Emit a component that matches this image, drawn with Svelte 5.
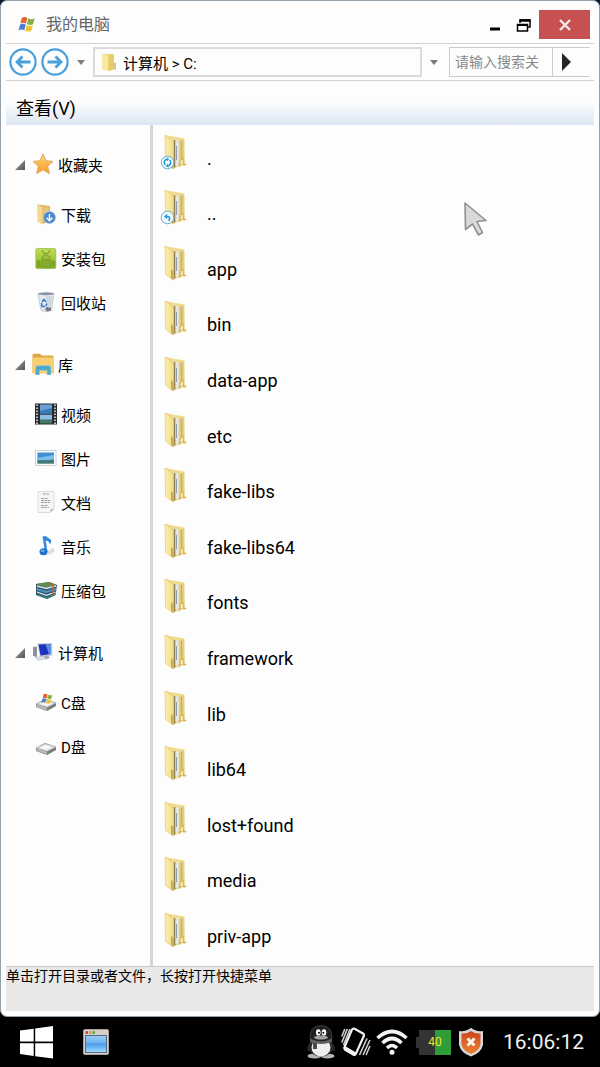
<script>
	let groups = [
		{
			name: '收藏夹',
			icon: 'star',
			open: true,
			items: [
				{ name: '下载', icon: 'download' },
				{ name: '安装包', icon: 'android' },
				{ name: '回收站', icon: 'bin' }
			]
		},
		{
			name: '库',
			icon: 'library',
			open: true,
			items: [
				{ name: '视频', icon: 'video' },
				{ name: '图片', icon: 'picture' },
				{ name: '文档', icon: 'document' },
				{ name: '音乐', icon: 'music' },
				{ name: '压缩包', icon: 'archive' }
			]
		},
		{
			name: '计算机',
			icon: 'computer',
			open: true,
			items: [
				{ name: 'C盘', icon: 'driveC' },
				{ name: 'D盘', icon: 'driveD' }
			]
		}
	];

	const files = [
		'.',
		'..',
		'app',
		'bin',
		'data-app',
		'etc',
		'fake-libs',
		'fake-libs64',
		'fonts',
		'framework',
		'lib',
		'lib64',
		'lost+found',
		'media',
		'priv-app'
	];

	let path = '计算机 > C:';
	let search = '';

	function toggleGroup(group) {
		group.open = !group.open;
		groups = groups;
	}

	function openFile(name) {
		if (name === '.') return;
		if (name === '..') {
			path = '计算机';
			return;
		}
		path = `计算机 > C: > ${name}`;
	}
</script>

<svelte:head>
	<title>我的电脑</title>
</svelte:head>

{#snippet flag()}
	<path d="M4 2 Q7 0 10 2 L8.500 8 Q5.500 6.500 2.500 8 Z" fill="#e8632c" />
	<path d="M11 2.500 Q14 4.500 17.500 2.500 L16 8.500 Q13 10.500 9.500 8.500 Z" fill="#7fb241" />
	<path d="M2.200 9 Q5.500 7.500 8.200 9 L6.700 15 Q4 13.500 .6 15 Z" fill="#4a7fd0" />
	<path d="M9.200 9.500 Q12.500 11.500 15.700 9.500 L14.200 15.500 Q11 17.500 7.700 15.500 Z" fill="#f3c332" />
{/snippet}

{#snippet drive()}
	<path d="M1 13 L10 8 L21 12 L21 15 L12 20 L1 16 Z" fill="#77797a" />
	<path d="M1 13 L10 8.500 L21 12 L12 16.500 Z" fill="#dfe0e0" stroke="#a2a3a4" stroke-width=".6" />
	<path d="M1.500 13.600 L12 17 V19.400 L1.500 15.800 Z" fill="#b9bbbc" />
	<path d="M5 13 L10.500 10 L17 12 L12 14.700 Z" fill="#f8f8f8" />
	<circle cx="14" cy="17.300" r=".8" fill="#4fa83d" />
{/snippet}

{#snippet icon(name)}
	<svg class="icon" viewBox="0 0 22 22" aria-hidden="true">
		{#if name === 'star'}
			<path
				d="M11 1 L14 7.700 L21 8.400 L15.700 13.200 L17.300 20.500 L11 16.800 L4.700 20.500 L6.300 13.200 L1 8.400 L8 7.700 Z"
				fill="url(#star)"
				stroke="#dd9a49"
				stroke-width=".8"
				stroke-linejoin="round"
			/>
		{:else if name === 'download'}
			<path d="M2 1.500 L15 3 L15.500 18 L7 21 Z" fill="#d9b264" />
			<path d="M2 1.500 L7.500 4 V21.500 L2.500 19 Z" fill="#f3d894" />
			<path d="M8.500 4 L14 4.500 V16 L8.500 18 Z" fill="#eac879" />
			<circle cx="14.500" cy="14.500" r="6" fill="#4785cc" stroke="#a9c7e8" stroke-width=".8" />
			<path d="M14.500 11 V17.500 M11.500 14.700 L14.500 17.700 L17.500 14.700" fill="none" stroke="#fff" stroke-width="1.500" />
		{:else if name === 'android'}
			<rect x=".8" y="1.500" width="20" height="20" rx="1.500" fill="url(#green)" stroke="#8ca936" stroke-width=".6" />
			<path d="M7 3 L8.500 6 Q11 7.500 13.500 6 L15 3" fill="none" stroke="#6f9425" />
			<path d="M6.500 12 Q7 8 11 8 Q15 8 15.500 12 Z" fill="#9cc33a" stroke="#729526" stroke-width=".7" />
			<path d="M2.500 14 H5 V19 H2.500 Z M6.500 13 H15.500 V20 H6.500 Z M17 14 H19.500 V19 H17 Z" fill="#86ac2b" stroke="#719324" stroke-width=".7" />
		{:else if name === 'bin'}
			<path d="M3 2.500 L19 2.500 L16.500 19.500 Q11 22 6 19.500 Z" fill="#e0e7ed" stroke="#b1bdc8" stroke-width=".7" />
			<ellipse cx="11" cy="2.800" rx="8" ry="1.500" fill="#8793a0" />
			<path d="M11 5 L17.500 5 L15.500 17 L12 14 Z" fill="#cfd8df" />
			<path d="M7 11 L9 8.500 L11 11 M6.500 12 L7 15.500 L10 15.500 M12 12.500 L10.800 15" fill="none" stroke="#3479bd" stroke-width="1.500" />
			<path d="M10 18 L12 15.500 L14.500 17 L16 16 L16 19.500 L12 20.500 Z" fill="#727980" />
		{:else if name === 'library'}
			<path d="M.5 2 Q.5 .7 2 .7 H8 L10 2.500 H20.500 Q21.500 2.500 21.500 4 V20 H.5 Z" fill="#dda946" />
			<path d="M.5 4.500 H21.500 V20.500 H.5 Z" fill="#f9cf70" />
			<path d="M3.500 22 V15 Q3.500 12.500 6 12.500 H16.500 Q19 12.500 19 15 V22 H15 V17.500 H7.500 V22 Z" fill="#51a9c6" stroke="#9dd2df" stroke-width=".7" />
		{:else if name === 'video'}
			<rect width="22" height="21" y=".5" fill="#292b30" />
			<rect x="5" y="1.500" width="12" height="9" fill="#699fd8" />
			<rect x="5" y="11.700" width="12" height="5" fill="#8dbce7" />
			<path d="M5 17 H17 V20.500 H5 Z" fill="#427861" />
			<path d="M5 8 L17 5 V10.500 H5 Z" fill="#3978b9" />
			<path d="M2 1.500 V21 M20 1.500 V21" stroke="#eee" stroke-width="1.500" stroke-dasharray="1.500 1.500" />
		{:else if name === 'picture'}
			<rect x=".5" y="3.500" width="20.500" height="15" fill="#fcfcfc" stroke="#bfc9d0" stroke-width=".8" />
			<rect x="2.500" y="5.500" width="16.500" height="11" fill="#3f91d3" />
			<path d="M2.500 11 L10 9.500 L19 8 V13 H2.500 Z" fill="#7dbde9" />
			<path d="M2.500 13 L8 13.500 L19 12.500 V16.500 H2.500 Z" fill="#457c75" />
		{:else if name === 'document'}
			<path d="M3 .5 H19 V18 L15.500 21.500 H3 Z" fill="#f5f5f5" stroke="#d4d4d4" stroke-width=".8" />
			<path d="M15.500 21.500 V18 H19 Z" fill="#bdbdbd" />
			<path d="M8 3 H14 M6 7.500 H13 M6 9.500 H15 M6 11.500 H15 M6 14.500 H13 M6 16.500 H14" stroke="#8c8c8c" stroke-width=".8" stroke-dasharray="3 .5" />
		{:else if name === 'music'}
			<path d="M12 17 L18 13 L20 16 L14 20 Z" fill="#ddd" />
			<path d="M7.500 1.500 L10.500 1 L15 4 Q17.500 5.500 15 9.500 Q14.500 6 10.700 5.500 L12.500 17 H10 Z" fill="#3589dd" />
			<ellipse cx="8.500" cy="16.800" rx="4" ry="3.500" fill="#226fc8" />
			<ellipse cx="7.700" cy="15.700" rx="2" ry="1.200" fill="#62aeea" />
		{:else if name === 'archive'}
			<path d="M1 5 L14 3 L22 6 L20.500 16 L12 20 L1 16 Z" fill="#345267" />
			<path d="M1 5 L14 3 L22 6 L11 8.500 Z" fill="#648d50" />
			<path d="M2 7 L11 9.500 L21 7" fill="none" stroke="#d9e5ea" stroke-width="1.300" />
			<path d="M1.500 10 L11 13 L21 10" fill="none" stroke="#5193c8" stroke-width="2" />
			<path d="M2 13 L11.500 16.300 L20.500 13" fill="none" stroke="#e2e9e9" stroke-width="1.300" />
			<path d="M2 15.500 L12 19 L20 15.500" fill="none" stroke="#36807a" stroke-width="1.500" />
			<path d="M14 4 L18 5.500 V16.500" fill="none" stroke="#b66635" stroke-width="1.500" />
		{:else if name === 'computer'}
			<path d="M1 6 L5 5.500 V16 L1 15 Z" fill="#8b949d" />
			<path d="M5.500 2.500 L20 2 L20.500 14.500 L8 16 Z" fill="#c2c6cf" />
			<path d="M6.500 3.500 L19 3 V13 L8.500 14.500 Z" fill="#1c33bd" />
			<path d="M13.500 3.200 L19 3 V13 L17 13.300 Z" fill="#5d8ce6" />
			<path d="M12 15 L16 14.500 L18 17 L13 18.500 Z" fill="#a4aab1" />
			<path d="M3 16.500 L11 15.500 L14 17.500 L6 19.500 Z" fill="#dce2e6" stroke="#a9afb4" stroke-width=".5" />
		{:else if name === 'driveC'}
			{@render drive()}
			<g transform="translate(6 2) scale(.65)">{@render flag()}</g>
		{:else if name === 'driveD'}
			{@render drive()}
		{/if}
	</svg>
{/snippet}

{#snippet folder(name)}
	<svg class="folder" viewBox="-4 0 28 36" aria-hidden="true">
		<path d="M1 1 L20.500 4.500 L21 30 L10 34.500 Z" fill="#efdc90" />
		<path d="M9.500 6.500 L11.500 6 V33 L9.500 34 Z" fill="#8f8159" />
		<path d="M11.500 6.500 L14.500 6 V31.500 L11.500 32 Z" fill="#e3e6ea" />
		<path d="M12.500 12 V26" stroke="#8e9db3" />
		<path d="M15 6 L20 5.500 V30 L15 32 Z" fill="#e2cf86" />
		<path d="M17.500 7 V24" stroke="#bcae7b" stroke-width="1.200" />
		<path d="M14.500 32 L17 23.500 H19.500 L20 29.500 L23 30 L20 32 L18 30 L16 33 Z" fill="#d9b758" />
		<path d="M17.300 26 H18.700 V30 H16.500 Z" fill="#f2efe2" />
		<path d="M1 1 L9.500 7 V35 L1.500 29.500 Z" fill="url(#fold)" stroke="#dfc366" stroke-width=".6" />
		<path d="M7 24 L9.500 26 V35 L7 33.500 Z" fill="#cfab48" />
		{#if name === '.' || name === '..'}
			<circle cx="3.500" cy="28.500" r="6.300" fill="#f4fbfe" stroke="#5aa5c8" stroke-width=".9" />
		{/if}
		{#if name === '.'}
			<path d="M1.300 30.900 A3.300 3.300 0 0 1 2.600 25.300 M5.700 26.100 A3.300 3.300 0 0 1 4.400 31.700" fill="none" stroke="#1f9ad6" stroke-width="1.500" />
			<path d="M2.200 23.600 L5.400 24.800 L3 27.200 Z M4.800 33.400 L1.600 32.200 L4 29.800 Z" fill="#1f9ad6" />
		{:else if name === '..'}
			<path d="M2 27.500 H4 Q6.500 28 5 32" fill="none" stroke="#1f9ad6" stroke-width="1.700" />
			<path d="M0 27.500 L3.200 24.800 V30.200 Z" fill="#1f9ad6" />
		{/if}
	</svg>
{/snippet}

<!-- shared gradients -->
<svg class="defs" width="0" height="0" aria-hidden="true">
	<defs>
		<linearGradient id="star" x2="0" y2="1">
			<stop offset="0" stop-color="#ffd778" />
			<stop offset="1" stop-color="#f79a26" />
		</linearGradient>
		<linearGradient id="green" x2="0" y2="1">
			<stop offset="0" stop-color="#c1dc55" />
			<stop offset="1" stop-color="#86b32b" />
		</linearGradient>
		<linearGradient id="fold">
			<stop offset="0" stop-color="#fbeeb0" />
			<stop offset="1" stop-color="#f1dc88" />
		</linearGradient>
		<linearGradient id="blue" x2="0" y2="1">
			<stop offset="0" stop-color="#9bcdf6" />
			<stop offset=".6" stop-color="#5ba9ee" />
			<stop offset="1" stop-color="#a3dcff" />
		</linearGradient>
		<linearGradient id="tri" x2="1" y2="1">
			<stop offset="0" stop-color="#aaa" />
			<stop offset="1" stop-color="#505050" />
		</linearGradient>
		<linearGradient id="shield" x2="0" y2="1">
			<stop offset="0" stop-color="#c9451c" />
			<stop offset="1" stop-color="#ee8034" />
		</linearGradient>
	</defs>
</svg>

<div class="desktop">
	<main class="window">
		<header class="title-bar">
			<svg class="logo" viewBox="0 0 18 18" aria-hidden="true">{@render flag()}</svg>
			<h1>我的电脑</h1>
			<button class="window-button" aria-label="最小化">
				<svg width="12" height="20" viewBox="0 0 12 20"><path d="M1 14 H11" stroke="#000" stroke-width="3" /></svg>
			</button>
			<button class="window-button" aria-label="还原">
				<svg width="16" height="20" viewBox="0 0 16 20" fill="none" stroke="#000">
					<path d="M4 8 V5 H14 V12 H12" stroke-width="1.500" />
					<path d="M3.500 5.500 H14.500" stroke-width="2.500" />
					<path d="M1.500 9.500 H11.500 V16 H1.500 Z" stroke-width="1.500" />
					<path d="M1 10 H12" stroke-width="2" />
				</svg>
			</button>
			<button class="close-button" aria-label="关闭">
				<svg width="12" height="12" viewBox="0 0 12 12"><path d="M1 1 L11 11 M11 1 L1 11" stroke="#f6e9e9" stroke-width="2.400" /></svg>
			</button>
		</header>

		<div class="toolbar">
			<button class="nav-button" aria-label="后退">
				<svg viewBox="0 0 28 28" fill="none" stroke="#489fdb">
					<circle cx="14" cy="14" r="12.600" stroke-width="2.200" />
					<path d="M21.500 14 H8 M13.500 8.500 L8 14 L13.500 19.500" stroke-width="2.800" />
				</svg>
			</button>
			<button class="nav-button" aria-label="前进">
				<svg viewBox="0 0 28 28" fill="none" stroke="#489fdb">
					<circle cx="14" cy="14" r="12.600" stroke-width="2.200" />
					<path d="M6.500 14 H20 M14.500 8.500 L20 14 L14.500 19.500" stroke-width="2.800" />
				</svg>
			</button>
			<button class="drop-button" aria-label="历史记录">
				<svg width="8" height="5" viewBox="0 0 8 5"><path d="M0 0 H8 L4 5 Z" fill="#7b7b7b" /></svg>
			</button>
			<div class="address">
				<svg width="16" height="20" viewBox="0 0 16 20" aria-hidden="true">
					<path d="M1 2 H12 Q13 2 13 3 V17 L9 19 L1 17 Z" fill="#ecd67c" />
					<path d="M1 2 L7 3.500 V19 L1 17 Z" fill="#f7e9a0" />
					<path d="M8 3 L12.500 2.500 V17 L8 18.500 Z" fill="#e8cc68" />
					<path d="M12 11 L15 10.500 V17.500 H12 Z" fill="#d3c498" />
				</svg>
				<input aria-label="地址" bind:value={path} />
			</div>
			<button class="drop-button" aria-label="最近位置">
				<svg width="8" height="5" viewBox="0 0 8 5"><path d="M0 0 H8 L4 5 Z" fill="#7b7b7b" /></svg>
			</button>
			<div class="search">
				<input aria-label="搜索" placeholder="请输入搜索关键字" bind:value={search} />
				<button aria-label="开始搜索">
					<svg width="9" height="18" viewBox="0 0 9 18"><path d="M0 0 L9 9 L0 18 Z" fill="#262626" /></svg>
				</button>
			</div>
		</div>

		<nav class="menu-bar">
			<button>查看(V)</button>
		</nav>

		<div class="content">
			<aside class="sidebar">
				{#each groups as group}
					<section class="group">
						<button class="group-header" aria-expanded={group.open} on:click={() => toggleGroup(group)}>
							<svg class="triangle" viewBox="0 0 10 14" aria-hidden="true"><path d="M10 3 V13 H0 Z" fill="url(#tri)" /></svg>
							{@render icon(group.icon)}
							<span>{group.name}</span>
						</button>
						{#if group.open}
							{#each group.items as item}
								<button class="group-item">
									{@render icon(item.icon)}
									<span>{item.name}</span>
								</button>
							{/each}
						{/if}
					</section>
				{/each}
			</aside>

			<div class="file-list">
				{#each files as file}
					<button class="file-row" on:click={() => openFile(file)}>
						{@render folder(file)}
						<span>{file}</span>
					</button>
				{/each}
			</div>
		</div>

		<footer class="status-bar">单击打开目录或者文件，长按打开快捷菜单</footer>

		<svg class="cursor" viewBox="0 0 23 36" aria-hidden="true">
			<path d="M1 1 L22 18.500 L13 19.500 L18.500 30.500 L14.500 33 L8.500 22 L1.500 27.500 Z" fill="#d9d9d9" stroke="#919191" stroke-width="1.600" stroke-linejoin="round" />
		</svg>
	</main>

	<footer class="taskbar">
		<button class="start" aria-label="开始">
			<svg width="33" height="33" viewBox="0 0 33 33" fill="#fff">
				<path d="M0 4.500 L13.700 2.700 V15.600 H0 Z M15.200 2.500 L33 0 V15.600 H15.200 Z M0 17.200 H13.700 V30 L0 28 Z M15.200 17.200 H33 V32.500 L15.200 30.200 Z" />
			</svg>
		</button>
		<button class="task" aria-label="我的电脑">
			<svg width="26" height="26" viewBox="0 0 26 26">
				<rect x=".5" y=".5" width="25" height="25" rx="1.500" fill="#d5d0cb" stroke="#aaa29c" />
				<path d="M2.500 3.500 H5" stroke="#c73d2b" stroke-width="2.500" />
				<path d="M6 3.500 H8.500" stroke="#dc9a32" stroke-width="2.500" />
				<path d="M9.500 3.500 H12" stroke="#4da343" stroke-width="2.500" />
				<rect x="2.500" y="6.500" width="21" height="17" fill="url(#blue)" stroke="#546b83" />
				<path d="M3 15 H23" stroke="#438fd8" />
			</svg>
		</button>
		<div class="tray">
			<svg width="30" height="36" viewBox="0 0 30 36" aria-hidden="true">
				<path d="M6 17 Q0 23 2 27 L6 25 M24 17 Q30 23 28 27 L24 25" fill="#202020" stroke="#383838" stroke-width=".6" />
				<ellipse cx="8.500" cy="32" rx="7" ry="2.600" fill="#b5b5b5" />
				<ellipse cx="21.500" cy="32" rx="7" ry="2.600" fill="#b5b5b5" />
				<ellipse cx="15" cy="23" rx="12" ry="9.500" fill="#2c2c2c" />
				<ellipse cx="15" cy="23.500" rx="9.500" ry="9" fill="#efefef" />
				<path d="M4 15 Q3 2 15 1.500 Q27 2 26 15 Q22 19 15 19 Q8 19 4 15 Z" fill="#202020" stroke="#4c4c4c" stroke-width=".7" />
				<ellipse cx="12.300" cy="8.500" rx="2.300" ry="3.200" fill="#fff" />
				<ellipse cx="18" cy="8.500" rx="2.300" ry="3.200" fill="#fff" />
				<circle cx="13" cy="8.800" r="1" />
				<circle cx="17.400" cy="8.800" r="1" />
				<ellipse cx="15" cy="13.500" rx="7" ry="2" fill="#a1a1a1" />
				<path d="M4 14.500 Q15 20 26 14.500 L26 18 Q15 22 4 18 Z" fill="#626262" />
				<path d="M7 19 H11 V25 H7 Z" fill="#4a4a4a" />
			</svg>
			<svg width="30" height="30" viewBox="0 0 30 30" fill="none" stroke="#f2f2f2" aria-hidden="true">
				<path d="M11 2.500 Q12 1 13.500 1.800 L22 6.500 Q23.500 7.500 22.800 9 L15 26.500 Q14 28.500 12.500 27.500 L4 22.500 Q3 21.500 3.500 20 Z" stroke-width="2.200" />
				<path d="M4 19.500 L15 26 L13 28.500 L3.500 23 Z" fill="#f2f2f2" />
				<path d="M.8 9.500 L3.800 2 M.8 15.500 L6.300 2 M2.500 18 L9 2 M29 13 L22 28 M29 19 L25 28 M26 11.500 L18.500 28" stroke="#cfcfcf" stroke-width="1.600" />
			</svg>
			<svg width="32" height="27" viewBox="0 0 32 27" fill="none" stroke="#f5f5f5" aria-hidden="true">
				<path d="M1.500 9 Q16 -4 30.500 9" stroke-width="3.600" />
				<path d="M6.500 14 Q16 5 25.500 14" stroke-width="3.600" />
				<path d="M11 19 Q16 14 21 19" stroke-width="3.400" />
				<circle cx="16" cy="23.300" r="2.500" fill="#f5f5f5" stroke="none" />
			</svg>
			<div class="battery"><span>40</span></div>
			<svg width="26" height="30" viewBox="0 0 26 30" aria-hidden="true">
				<path d="M1 4 Q8 5 13 .8 Q18 5 25 4 V18 Q23 26 13 29.500 Q3 26 1 18 Z" fill="#d7d7d7" />
				<path d="M3.500 6.500 Q9 7 13 4 Q17 7 22.500 6.500 V17.500 Q21 24 13 27 Q5 24 3.500 17.500 Z" fill="url(#shield)" />
				<path d="M9.500 11.500 L16.500 18.500 M16.500 11.500 L9.500 18.500" stroke="#fff4ea" stroke-width="3" />
			</svg>
		</div>
		<time>16:06:12</time>
	</footer>
</div>

<style>
	:global(body) {
		margin: 0;
		background: #000;
		font-family: Roboto, 'Noto Sans CJK SC', sans-serif;
		color: #000;
	}

	button,
	input {
		margin: 0;
		padding: 0;
		border: none;
		background: none;
		font: inherit;
		color: inherit;
		text-align: left;
	}

	button {
		cursor: pointer;
	}

	svg {
		display: block;
		flex-shrink: 0;
	}

	.defs {
		position: absolute;
	}

	.desktop {
		display: flex;
		flex-direction: column;
		min-height: 100vh;
		background: linear-gradient(#0c1a33, #000);
	}

	.window {
		position: relative;
		display: flex;
		flex-direction: column;
		flex: 1;
		padding: 0 5px 5px;
		border: 1px solid #93a2ad;
		border-radius: 7px;
		background: #fdfdfd;
	}

	.title-bar {
		display: flex;
		align-items: center;
		gap: 11px;
		box-sizing: border-box;
		height: 43px;
		padding: 5px 4px 0 12px;
		border-bottom: 1px solid #d2d2d2;
	}

	.logo {
		width: 17px;
		height: 17px;
	}

	h1 {
		flex: 1;
		margin: 0;
		font-size: 16px;
		font-weight: 400;
		line-height: 24px;
		color: #666;
	}

	.window-button {
		padding: 0 2px;
	}

	.close-button {
		display: flex;
		align-items: center;
		justify-content: center;
		width: 51px;
		height: 29px;
		margin-left: -6px;
		background: #c75050;
	}

	.toolbar {
		display: flex;
		align-items: center;
		gap: 4px;
		height: 36px;
		padding: 0 4px 0 3px;
		border-bottom: 1px solid #d2d2d2;
	}

	.nav-button svg {
		width: 28px;
		height: 28px;
	}

	.drop-button {
		display: flex;
		justify-content: center;
		width: 16px;
	}

	.address,
	.search {
		display: flex;
		align-items: center;
		box-sizing: border-box;
		height: 30px;
		border: 1px solid #ccc;
	}

	.address {
		flex: 1;
		gap: 6px;
		padding: 0 6px;
		border-width: 2px;
		border-color: #dadada;
	}

	.address input {
		flex: 1;
		min-width: 0;
		font-size: 15px;
	}

	.search {
		width: 141px;
		margin-left: 3px;
		border-right: none;
	}

	.search input {
		width: 84px;
		margin: 0 13px 0 5px;
		font-size: 14px;
	}

	.search input::placeholder {
		color: #888;
		opacity: 1;
	}

	.search button {
		flex: 1;
		height: 100%;
		padding-left: 9px;
		border-left: 1px solid #ccc;
	}

	.menu-bar {
		display: flex;
		align-items: flex-end;
		height: 44px;
		background: linear-gradient(#fdfdfd 45%, #dde6f4);
	}

	.menu-bar button {
		padding: 0 10px 3px;
		font-size: 18px;
		line-height: 26px;
	}

	.content {
		display: flex;
		flex: 1;
	}

	.sidebar {
		box-sizing: border-box;
		width: 147px;
		padding: 11px 0;
		border-right: 3px solid #d5d6d8;
		font-size: 15px;
	}

	.group {
		display: flex;
		flex-direction: column;
		margin-bottom: 12px;
	}

	.group-header,
	.group-item {
		display: flex;
		align-items: center;
		gap: 4px;
	}

	.group-header {
		height: 56px;
		padding-left: 9px;
	}

	.group-item {
		height: 44px;
		padding-left: 29px;
	}

	.triangle {
		width: 10px;
		height: 14px;
		margin-right: 3px;
	}

	.icon {
		width: 22px;
		height: 22px;
	}

	.file-list {
		display: flex;
		flex: 1;
		flex-direction: column;
		padding: 0 0 7px;
	}

	.file-row {
		display: flex;
		flex: 1;
		align-items: flex-end;
		gap: 19px;
		box-sizing: border-box;
		min-height: 55px;
		padding: 0 7px 11px;
		font-size: 18px;
		line-height: 22px;
	}

	.folder {
		width: 28px;
		height: 36px;
	}

	.status-bar {
		height: 44px;
		border-top: 1px solid #c9c9c9;
		background: #e8e8e8;
		font-size: 14px;
		line-height: 18px;
	}

	.cursor {
		position: absolute;
		top: 201px;
		right: 112px;
		width: 23px;
		height: 36px;
		pointer-events: none;
	}

	.taskbar {
		display: flex;
		align-items: center;
		height: 50px;
		padding: 0 16px 0 20px;
		background: #000;
	}

	.task {
		margin-left: 30px;
	}

	.tray {
		display: flex;
		align-items: center;
		gap: 5px;
		margin-left: auto;
	}

	.battery {
		width: 32px;
		margin: 0 2px 0 6px;
		background: linear-gradient(90deg, #333 50%, #2f9e38 50%);
		position: relative;
		font-size: 12px;
		line-height: 25px;
		text-align: center;
		color: #e9e92c;
	}

	.battery::before {
		content: '';
		position: absolute;
		left: -3px;
		top: 7px;
		width: 3px;
		height: 11px;
		background: #333;
	}

	time {
		margin-left: 19px;
		font-size: 21px;
		line-height: 28px;
		color: #f2f2f2;
	}
</style>
